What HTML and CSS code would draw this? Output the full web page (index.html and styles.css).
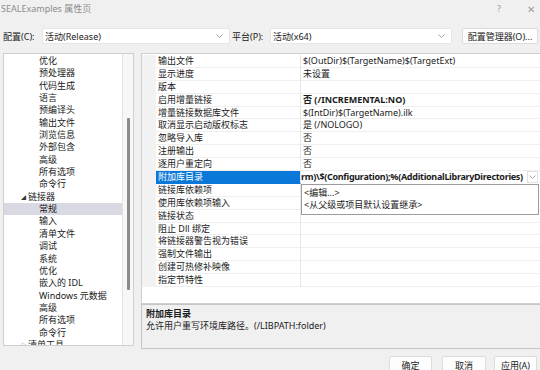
FILE: index.html
```html
<!DOCTYPE html>
<html>
<head>
<meta charset="utf-8">
<link rel="stylesheet" href="styles.css">
</head>
<body>
<div class="window">
  <div class="titlebar">
    <span class="title">SEALExamples 属性页</span>
    <span class="tb-btns"><span class="help">?</span><span class="close">✕</span></span>
  </div>
  <div class="toolbar">
    <span class="lbl lbl-conf">配置(C):</span>
    <div class="combo combo-conf"><span>活动(Release)</span><svg class="chev" width="7" height="4" viewBox="0 0 7 4"><path d="M0.5 0.5 L3.5 3.5 L6.5 0.5" fill="none" stroke="#9a9a9a" stroke-width="0.9"/></svg></div>
    <span class="lbl lbl-plat">平台(P):</span>
    <div class="combo combo-plat"><span>活动(x64)</span><svg class="chev" width="7" height="4" viewBox="0 0 7 4"><path d="M0.5 0.5 L3.5 3.5 L6.5 0.5" fill="none" stroke="#9a9a9a" stroke-width="0.9"/></svg></div>
    <div class="btn btn-mgr">配置管理器(O)...</div>
  </div>
  <div class="main">
    <div class="tree">
      <div class="tree-list">
        <div class="ti l2">优化</div>
        <div class="ti l2">预处理器</div>
        <div class="ti l2">代码生成</div>
        <div class="ti l2">语言</div>
        <div class="ti l2">预编译头</div>
        <div class="ti l2">输出文件</div>
        <div class="ti l2">浏览信息</div>
        <div class="ti l2">外部包含</div>
        <div class="ti l2">高级</div>
        <div class="ti l2">所有选项</div>
        <div class="ti l2">命令行</div>
        <div class="ti l1"><span class="tri">◢</span>链接器</div>
        <div class="ti l2 sel">常规</div>
        <div class="ti l2">输入</div>
        <div class="ti l2">清单文件</div>
        <div class="ti l2">调试</div>
        <div class="ti l2">系统</div>
        <div class="ti l2">优化</div>
        <div class="ti l2">嵌入的 IDL</div>
        <div class="ti l2">Windows 元数据</div>
        <div class="ti l2">高级</div>
        <div class="ti l2">所有选项</div>
        <div class="ti l2">命令行</div>
        <div class="ti l1"><span class="tri open">▷</span>清单工具</div>
      </div>
      <div class="vscroll"><div class="thumb"></div></div>
    </div>
    <div class="right">
      <div class="grid">
        <div class="row"><div class="gut"></div><div class="name">输出文件</div><div class="val">$(OutDir)$(TargetName)$(TargetExt)</div></div>
        <div class="row"><div class="gut"></div><div class="name">显示进度</div><div class="val">未设置</div></div>
        <div class="row"><div class="gut"></div><div class="name">版本</div><div class="val"></div></div>
        <div class="row"><div class="gut"></div><div class="name">启用增量链接</div><div class="val b">否 (/INCREMENTAL:NO)</div></div>
        <div class="row"><div class="gut"></div><div class="name">增量链接数据库文件</div><div class="val">$(IntDir)$(TargetName).ilk</div></div>
        <div class="row"><div class="gut"></div><div class="name">取消显示启动版权标志</div><div class="val">是 (/NOLOGO)</div></div>
        <div class="row"><div class="gut"></div><div class="name">忽略导入库</div><div class="val">否</div></div>
        <div class="row"><div class="gut"></div><div class="name">注册输出</div><div class="val">否</div></div>
        <div class="row"><div class="gut"></div><div class="name">逐用户重定向</div><div class="val">否</div></div>
        <div class="row"><div class="gut"></div><div class="name hl">附加库目录</div>
          <div class="val edit"><div class="edit-box"><span class="edit-text b">rm)\$(Configuration);%(AdditionalLibraryDirectories)</span></div><span class="dd"><svg width="7" height="4" viewBox="0 0 7 4"><path d="M0.5 0.5 L3.5 3.5 L6.5 0.5" fill="none" stroke="#9a9a9a" stroke-width="0.9"/></svg></span>
            <div class="popup">
              <div class="pi">&lt;编辑...&gt;</div>
              <div class="pi">&lt;从父级或项目默认设置继承&gt;</div>
            </div>
          </div>
        </div>
        <div class="row"><div class="gut"></div><div class="name">链接库依赖项</div><div class="val"></div></div>
        <div class="row"><div class="gut"></div><div class="name">使用库依赖项输入</div><div class="val"></div></div>
        <div class="row"><div class="gut"></div><div class="name">链接状态</div><div class="val"></div></div>
        <div class="row"><div class="gut"></div><div class="name">阻止 Dll 绑定</div><div class="val"></div></div>
        <div class="row"><div class="gut"></div><div class="name">将链接器警告视为错误</div><div class="val"></div></div>
        <div class="row"><div class="gut"></div><div class="name">强制文件输出</div><div class="val"></div></div>
        <div class="row"><div class="gut"></div><div class="name">创建可热修补映像</div><div class="val"></div></div>
        <div class="row"><div class="gut"></div><div class="name">指定节特性</div><div class="val"></div></div>
      </div>
      <div class="desc">
        <div class="desc-title">附加库目录</div>
        <div class="desc-text">允许用户重写环境库路径。(/LIBPATH:folder)</div>
      </div>
    </div>
  </div>
  <div class="buttons">
    <div class="btn bb ok">确定</div>
    <div class="btn bb cancel">取消</div>
    <div class="btn bb apply">应用(A)</div>
  </div>
</div>
</body>
</html>
```

FILE: styles.css
```css
* { box-sizing: border-box; }
html, body { margin: 0; padding: 0; }
body {
  width: 540px;
  height: 370px;
  overflow: hidden;
  background: #f0f0f0;
  font-family: "Noto Sans", "Noto Sans CJK SC", sans-serif;
  font-size: 9px;
  color: #1a1a1a;
}
.window { display: flex; flex-direction: column; height: 370px; }
.window > * { flex-shrink: 0; }

.titlebar {
  height: 17px;
  display: flex;
  align-items: center;
  justify-content: space-between;
  padding-left: 1px;
  color: #8c8c8c;
}
.title { font-size: 9px; }
.tb-btns { display: flex; align-items: center; color: #9a9a9a; }
.help { font-size: 9px; margin-right: 26px; }
.close { font-size: 10px; margin-right: 5px; }

.toolbar {
  margin-top: 11px;
  height: 16px;
  display: flex;
  align-items: center;
}
.toolbar > * { flex-shrink: 0; }
.lbl { color: #1a1a1a; }
.lbl-conf { margin-left: 3px; width: 39px; }
.lbl-plat { margin-left: 2px; width: 38px; }
.combo {
  height: 16px;
  background: #fff;
  border: 1px solid #e6e6e6;
  border-radius: 2px;
  display: flex;
  align-items: center;
  justify-content: space-between;
  padding: 0 6px 0 2px;
}
.combo-conf { width: 188px; }
.combo-plat { width: 182px; }
.chev { display: block; }
.btn {
  background: #fdfdfd;
  border: 1px solid #dcdcdc;
  border-radius: 2px;
  display: flex;
  align-items: center;
  justify-content: center;
}
.btn-mgr { margin-left: 10px; width: 76px; height: 16px; }

.main {
  margin-top: 9px;
  display: flex;
  height: 296px;
}
.tree {
  flex-shrink: 0;
  margin-left: 3px;
  width: 131px;
  height: 293px;
  background: #fff;
  border: 1px solid #cfcfcf;
  display: flex;
  overflow: hidden;
}
.tree-list { width: 118px; padding-top: 1px; flex-shrink: 0; }
.ti {
  height: 12.35px;
  line-height: 12.35px;
  white-space: nowrap;
}
.l2 { padding-left: 35px; }
.l1 { padding-left: 17px; display: flex; align-items: center; }
.tri { font-size: 5px; width: 7px; color: #333; }
.tri.open { font-size: 6px; color: #555; }
.sel { background: #d9d9e4; }
.vscroll {
  flex: 1;
  border-left: 1px solid #e2e2e2;
  background: #f7f7f7;
  padding-top: 64px;
  display: flex;
  justify-content: center;
}
.thumb { width: 3px; height: 172px; background: #8a8a8a; border-radius: 1px; }

.right {
  margin-left: 7px;
  flex: 1;
  min-width: 0;
  display: flex;
  flex-direction: column;
}
.grid {
  height: 252px;
  background: #fff;
  border: 1px solid #cfcfcf;
  border-right: none;
  padding-top: 1px;
}
.row { display: flex; height: 12.9px; }
.gut { width: 14px; flex-shrink: 0; background: #f2f2f2; }
.name {
  width: 145px;
  flex-shrink: 0;
  padding-left: 2px;
  line-height: 12px;
  border-bottom: 1px solid #efefef;
  border-right: 1px solid #e6e6e6;
  white-space: nowrap;
}
.name.hl { background: #0a78d8; color: #fff; border-bottom-color: #0a78d8; }
.val {
  flex: 1;
  min-width: 0;
  padding-left: 2px;
  line-height: 12px;
  border-bottom: 1px solid #efefef;
  white-space: nowrap;
}
.b { font-weight: bold; }
.val.edit {
  position: relative;
  display: flex;
  align-items: center;
  padding-left: 0;
  border-bottom: none;
}
.edit-box {
  flex: 1;
  min-width: 0;
  overflow: hidden;
  display: flex;
  justify-content: flex-start;
  padding-right: 2px;
}
.edit-text { white-space: nowrap; letter-spacing: -0.3px; flex-shrink: 0; }
.dd {
  flex-shrink: 0;
  width: 11px;
  height: 12px;
  margin-right: 2px;
  border: 1px solid #e2e2e2;
  display: flex;
  align-items: center;
  justify-content: center;
}
.popup {
  position: absolute;
  left: 0;
  right: 1px;
  top: 12.9px;
  height: 31px;
  background: #fff;
  border: 1px solid #9c9c9c;
  padding-top: 2px;
  z-index: 2;
}
.pi { padding-left: 2px; height: 12.5px; line-height: 12.5px; }

.desc {
  height: 45px;
  background: #f0f0f0;
  border: 1px solid #c6c6c6;
  border-right: none;
  padding: 3px 0 0 4px;
}
.desc-title { font-weight: bold; line-height: 12px; }
.desc-text { line-height: 12px; }

.buttons {
  margin-top: 7px;
  display: flex;
  justify-content: flex-end;
  padding-right: 3px;
}
.bb { height: 18px; width: 43px; margin-left: 10px; flex-shrink: 0; }
.bb.cancel { width: 44px; margin-left: 10px; }
.bb.apply { width: 43px; margin-left: 8px; }
```
